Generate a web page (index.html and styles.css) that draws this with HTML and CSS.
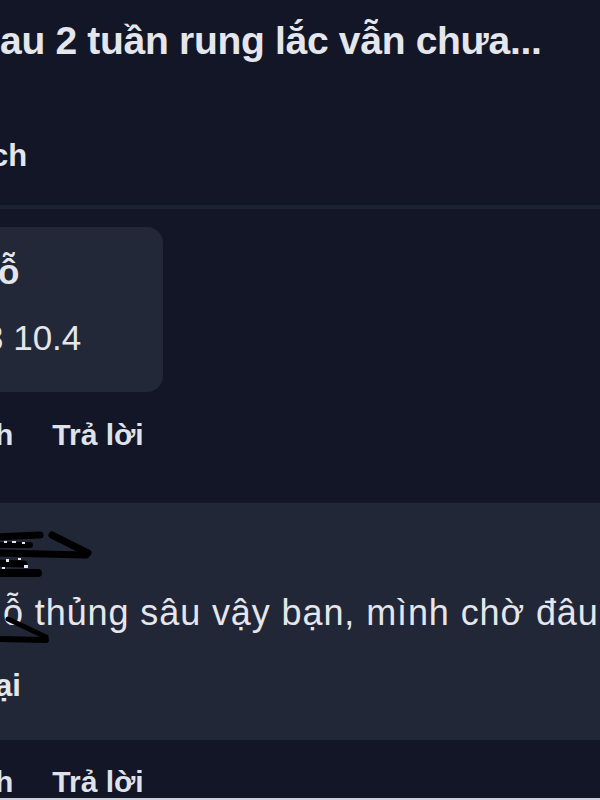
FILE: index.html
```html
<!DOCTYPE html>
<html lang="vi">
<head>
  <meta charset="UTF-8">
  <meta name="viewport" content="width=device-width, initial-scale=1.0">
  <title>Bình luận</title>
  <link rel="stylesheet" href="styles.css">
</head>
<body>
  <div class="feed">
    <p class="post-title">au 2 tuần rung lắc vẫn chưa...</p>
    <div class="post-actions"><span class="cut-left">ch</span></div>
    <div class="divider"></div>

    <div class="comment">
      <div class="bubble">
        <div class="author"><span class="cut-left">ỗ</span></div>
        <div class="bubble-text"><span class="cut-three">3</span> 10.4</div>
      </div>
      <div class="actions">
        <span class="cut-h">h</span>
        <span>Trả lời</span>
      </div>
    </div>

    <div class="comment highlighted">
      <!-- redacted name -->
      <svg class="redact" width="100" height="130" viewBox="0 0 100 130">
        <g stroke="#000" stroke-linecap="round" fill="none">
          <path d="M-4 14 L40 12" stroke-width="7"/>
          <path d="M52 12 L88 30" stroke-width="7"/>
          <path d="M-4 30 L86 32" stroke-width="7"/>
          <path d="M-4 50 L38 50" stroke-width="8"/>
          <path d="M-4 22 L30 22" stroke-width="6"/>
          <path d="M-4 40 L24 41" stroke-width="7"/>
          <path d="M8 96 L46 114" stroke-width="5"/>
          <path d="M-4 116 L46 117" stroke-width="6"/>
        </g>
        <g fill="#e4e6eb">
          <rect x="4" y="18" width="3" height="2"/>
          <rect x="12" y="18" width="4" height="2"/>
          <rect x="22" y="19" width="3" height="2"/>
          <rect x="6" y="36" width="3" height="3"/>
          <rect x="18" y="35" width="3" height="2"/>
          <rect x="24" y="42" width="4" height="3"/>
          <rect x="2" y="44" width="3" height="2"/>
        </g>
      </svg>
      <div class="name-row"></div>
      <p class="comment-text"><span class="lead">ỗ</span> thủng sâu vậy bạn, mình chờ đâu</p>
      <p class="meta"><span class="cut-a">ại</span></p>
    </div>

    <div class="actions actions-bottom">
      <span class="cut-h">h</span>
      <span>Trả lời</span>
    </div>
  </div>
</body>
</html>
```

FILE: styles.css
```css
/* Reset */
* {
    margin: 0;
    padding: 0;
    box-sizing: border-box;
}

body {
    font-family: 'Liberation Sans', Arial, sans-serif;
    background: #121627;
    color: #e4e6eb;
    height: 100vh;
    overflow: hidden;
    border-bottom: 2px solid #cfd2d9;
}

.feed {
    display: flex;
    flex-direction: column;
}

/* Post header */
.post-title {
    padding-top: 17px;
    font-size: 39px;
    line-height: 48px;
    font-weight: 700;
    white-space: nowrap;
    letter-spacing: -0.3px;
}

.post-actions {
    margin-top: 71px;
    font-size: 31px;
    line-height: 40px;
    font-weight: 700;
}

.cut-left {
    margin-left: -9px;
}

.divider {
    margin-top: 29px;
    height: 4px;
    background: #1c2131;
}

/* Comment bubble */
.comment {
    position: relative;
}

.bubble {
    margin-top: 18px;
    width: 163px;
    padding: 25px 0 34px;
    background: #232838;
    border-radius: 0 16px 16px 0;
}

.author {
    font-size: 35px;
    line-height: 40px;
    font-weight: 700;
}

.author .cut-left {
    margin-left: -2px;
}

.bubble-text {
    margin-top: 26px;
    font-size: 35px;
    line-height: 40px;
    white-space: nowrap;
}

.cut-three {
    margin-left: -16px;
}

/* Like / reply row */
.actions {
    margin-top: 23px;
    display: flex;
    gap: 39px;
    font-size: 30px;
    line-height: 40px;
    font-weight: 700;
    color: #dfe2e9;
}

.cut-h {
    margin-left: -5px;
}

/* Highlighted reply */
.highlighted {
    margin-top: 48px;
    padding: 22px 0 34px;
    background: #222737;
}

.redact {
    position: absolute;
    left: 0;
    top: 20px;
}

.name-row {
    height: 50px;
}

.comment-text {
    margin-top: 16px;
    font-size: 36px;
    line-height: 44px;
    letter-spacing: 0.9px;
    white-space: nowrap;
    overflow: hidden;
}

.lead {
    margin-left: 3px;
}

.meta {
    margin-top: 31px;
    font-size: 31px;
    line-height: 40px;
    font-weight: 700;
}

.cut-a {
    margin-left: -5px;
}

.actions-bottom {
    margin-top: 22px;
}
```
